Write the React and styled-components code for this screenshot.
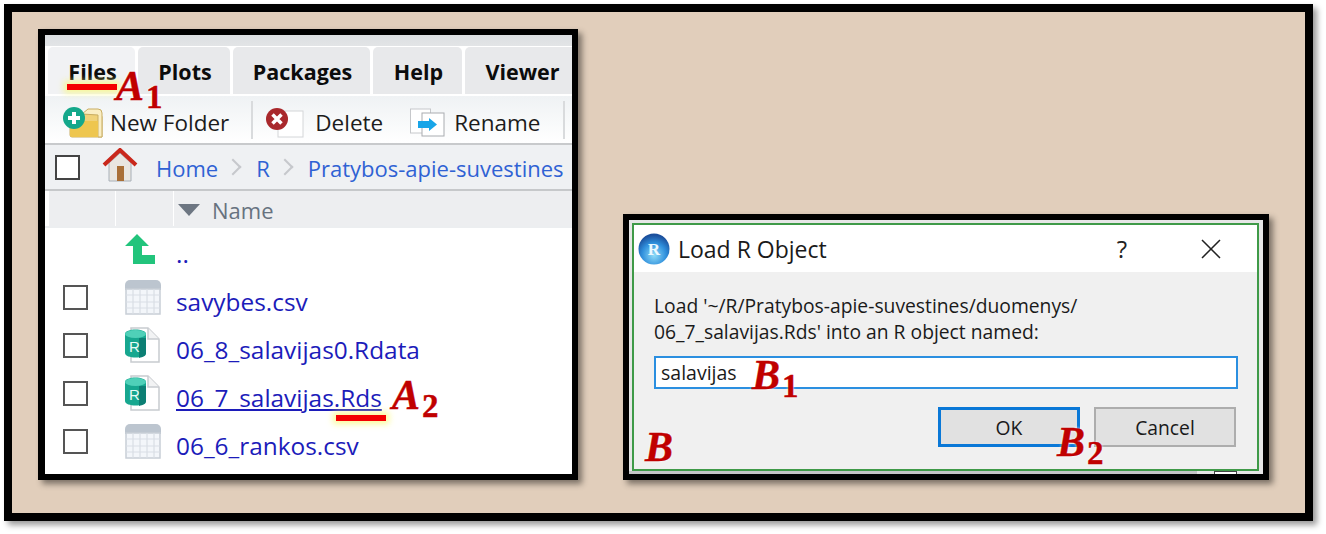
import React from 'react';
import styled, { createGlobalStyle } from 'styled-components';

const GlobalStyle = createGlobalStyle`
  html, body {
    margin: 0;
    padding: 0;
    background: #fff;
  }
  body {
    font-family: "Open Sans", "Liberation Sans", sans-serif;
  }
`;

const tabs = [
  { name: 'Files', width: 87, active: true },
  { name: 'Plots', width: 92 },
  { name: 'Packages', width: 137 },
  { name: 'Help', width: 89 },
  { name: 'Viewer', width: 113 },
];

const files = [
  { name: '..', icon: 'up' },
  { name: 'savybes.csv', icon: 'table', check: true },
  { name: '06_8_salavijas0.Rdata', icon: 'r', check: true },
  { name: '06_7_salavijas.Rds', icon: 'r', check: true, hover: true },
  { name: '06_6_rankos.csv', icon: 'table', check: true },
];

function NewFolderIcon() {
  return (
    <svg width="42" height="32" viewBox="0 0 42 32">
      <path d="M8 10h8l3-3h18a3 3 0 0 1 3 3v20H10a2 2 0 0 1-2-2z" fill="#f0d27a" stroke="#c9ad62" />
      <path d="M20 7 26 2h10a4 4 0 0 1 4 4v24h-4V8z" fill="#faeec4" stroke="#c9ad62" />
      <path d="M8 14h28v16H10a2 2 0 0 1-2-2z" fill="#eec64f" />
      <circle cx="12" cy="11" r="11" fill="#14a88b" />
      <path d="M12 5v12M6 11h12" stroke="#fff" strokeWidth="4" />
    </svg>
  );
}

function DeleteIcon() {
  return (
    <svg width="38" height="30" viewBox="0 0 38 30">
      <rect x="12" y="3" width="25" height="26" fill="#fff" stroke="#d4d6d8" />
      <circle cx="11" cy="11" r="11" fill="#a9282c" />
      <path d="M6.500 6.500l9 9M15.500 6.500l-9 9" stroke="#fff" strokeWidth="3.500" />
    </svg>
  );
}

function RenameIcon() {
  return (
    <svg width="35" height="30" viewBox="0 0 35 30">
      <rect x="0.500" y="1" width="20" height="24" fill="#fff" stroke="#c6c8cb" />
      <rect x="12" y="5" width="22" height="23" fill="#fff" stroke="#a9acb0" />
      <path d="M8 13h11v-3l8 6.500-8 6.500v-3H8z" fill="#18a5e8" />
    </svg>
  );
}

function HomeIcon() {
  return (
    <svg width="36" height="34" viewBox="0 0 36 34">
      <path d="M7 15 18 5l11 10v18H7z" fill="#e9e6e0" stroke="#a8b0b8" />
      <rect x="15" y="18" width="7" height="15" fill="#a96f36" />
      <path d="M2 17 18 2l16 15" fill="none" stroke="#c9281c" strokeWidth="4" />
    </svg>
  );
}

function UpIcon() {
  return (
    <svg width="30" height="30" viewBox="0 0 30 30">
      <path d="M0 12 12 0l12 12h-7v9h13v9H8V12z" fill="#22c47c" />
    </svg>
  );
}

function TableIcon() {
  return (
    <svg width="36" height="35" viewBox="0 0 36 35">
      <path d="M0 5a5 5 0 0 1 5-5h26a5 5 0 0 1 5 5v5H0z" fill="#bcc5cf" />
      <rect x="1" y="9" width="34" height="25" fill="#f3f6fa" stroke="#c8ced6" strokeWidth="1.500" />
      <path d="M8 9v25M15 9v25M22 9v25M29 9v25M1 15h34M1 22h34M1 28h34" stroke="#d9dee5" strokeWidth="1.200" />
    </svg>
  );
}

function RDocIcon() {
  return (
    <svg width="36" height="36" viewBox="0 0 36 36">
      <path d="M6 1h17l11 11v23H6z" fill="#fff" stroke="#c8cbcf" strokeWidth="1.500" />
      <path d="M23 1v11h11" fill="#f2f3f4" stroke="#c8cbcf" strokeWidth="1.500" />
      <path d="M0 7c0-6 21-6 21 0v19c0 6-21 6-21 0z" fill="#17a78f" />
      <ellipse cx="10.500" cy="7" rx="10.500" ry="4" fill="#4fd0b8" />
      <path d="M14 11h7v15c0 3-3 4-7 5z" fill="#0c7f74" />
      <text x="4" y="25" fontFamily="Liberation Sans, sans-serif" fontSize="15" fill="#e8fbf7">R</text>
    </svg>
  );
}

function RLogo() {
  return (
    <svg width="32" height="32" viewBox="0 0 32 32">
      <defs>
        <radialGradient id="rBall" cx="50%" cy="70%" r="65%">
          <stop offset="0%" stopColor="#8fdcf8" />
          <stop offset="60%" stopColor="#2f8fdc" />
          <stop offset="100%" stopColor="#1b4f9c" />
        </radialGradient>
      </defs>
      <circle cx="16" cy="16" r="15.500" fill="url(#rBall)" />
      <text x="16" y="22" textAnchor="middle" fontFamily="Liberation Serif, serif" fontWeight="bold" fontSize="17" fill="#eaf8ff">R</text>
    </svg>
  );
}

function CloseIcon() {
  return (
    <svg width="20" height="20" viewBox="0 0 20 20">
      <path d="M1 1l18 18M19 1 1 19" stroke="#222" strokeWidth="1.500" fill="none" />
    </svg>
  );
}

function FileIcon({ type }) {
  if (type === 'up') return <UpIcon />;
  if (type === 'table') return <TableIcon />;
  return <RDocIcon />;
}

function App() {
  return (
    <Page>
      <GlobalStyle />
      <Frame>
        <FilesPanel>
          <PanelInner>
            <TabBar>
              {tabs.map((tab) => (
                <Tab key={tab.name} $width={tab.width} $active={tab.active}>{tab.name}</Tab>
              ))}
            </TabBar>
            <Toolbar>
              <ToolButton $gap={6}><NewFolderIcon />New Folder</ToolButton>
              <ToolSeparator />
              <ToolButton $gap={11}><DeleteIcon />Delete</ToolButton>
              <ToolButton $gap={9} $offset={27}><RenameIcon />Rename</ToolButton>
              <ToolSeparator />
            </Toolbar>
            <PathBar>
              <HeaderCheck />
              <HomeSlot><HomeIcon /></HomeSlot>
              <Crumb>Home</Crumb>
              <Chevron />
              <Crumb>R</Crumb>
              <Chevron />
              <Crumb>Pratybos-apie-suvestines</Crumb>
            </PathBar>
            <TableHead>
              <HeadCell $width={66} />
              <HeadCell $width={57} />
              <NameHead><SortArrow />Name</NameHead>
            </TableHead>
            <FileList>
              {files.map((file) => (
                <FileRow key={file.name}>
                  <CheckCell>{file.check && <RowCheck />}</CheckCell>
                  <IconCell><FileIcon type={file.icon} /></IconCell>
                  <FileName $hover={file.hover}>{file.name}</FileName>
                </FileRow>
              ))}
            </FileList>
          </PanelInner>
          <Underscore $left={22} $top={49} />
          <Underscore $left={291} $top={380} />
          <Tag $left={71} $top={36}>A<sub>1</sub></Tag>
          <Tag $left={347} $top={345}>A<sub>2</sub></Tag>
        </FilesPanel>

        <DialogPanel>
          <BehindStrip />
          <BehindBox />
          <DialogWindow>
            <TitleBar>
              <RLogo />
              <Title>Load R Object</Title>
              <HelpMark>?</HelpMark>
              <CloseSlot><CloseIcon /></CloseSlot>
            </TitleBar>
            <DialogBody>
              <Message>
                Load '~/R/Pratybos-apie-suvestines/duomenys/<br />
                06_7_salavijas.Rds' into an R object named:
              </Message>
              <Field>salavijas</Field>
              <ButtonRow>
                <DialogButton $primary>OK</DialogButton>
                <DialogButton>Cancel</DialogButton>
              </ButtonRow>
            </DialogBody>
          </DialogWindow>
          <Tag $left={123} $top={140}>B<sub>1</sub></Tag>
          <Tag $left={16} $top={212}>B</Tag>
          <Tag $left={428} $top={207}>B<sub>2</sub></Tag>
        </DialogPanel>
      </Frame>
    </Page>
  );
}

export default App;

const Page = styled.div`
  padding: 4px 0 0 4px;
  width: 1326px;
  height: 534px;
  box-sizing: border-box;
  overflow: hidden;
`;

const Frame = styled.div`
  box-sizing: border-box;
  width: 1309px;
  height: 517px;
  border: 8px solid #000;
  background: #e1cebb;
  box-shadow: 4px 4px 6px rgba(0, 0, 0, 0.4);
  display: flex;
  align-items: flex-end;
  padding: 0 0 33px 26px;
  gap: 45px;
`;

const FilesPanel = styled.div`
  position: relative;
  box-sizing: border-box;
  width: 540px;
  height: 451px;
  border: solid #000;
  border-width: 6px 6px 6px 7px;
  box-shadow: 4px 4px 6px rgba(0, 0, 0, 0.45);
  background: #fff;
`;

const PanelInner = styled.div`
  height: 100%;
  overflow: hidden;
  display: flex;
  flex-direction: column;
`;

const TabBar = styled.div`
  display: flex;
  gap: 3px;
  height: 59px;
  padding: 12px 0 0 3px;
  box-sizing: border-box;
  background: linear-gradient(#dcdfe2, #e2e4e6 11px, #ffffff 11px);
  flex-shrink: 0;
`;

const Tab = styled.div`
  flex-shrink: 0;
  box-sizing: border-box;
  width: ${(p) => p.$width}px;
  height: 47px;
  display: flex;
  align-items: center;
  justify-content: center;
  border-radius: 5px 5px 0 0;
  background: ${(p) => (p.$active ? '#f1f2f4' : '#e8e9eb')};
  color: #0c0c0c;
  font-size: 21.500px;
  font-weight: 700;
  padding: 2px 0 0 2px;
`;

const Toolbar = styled.div`
  height: 49px;
  flex-shrink: 0;
  margin-top: 2px;
  box-sizing: border-box;
  display: flex;
  align-items: center;
  padding: 7px 0 0 17px;
  background: linear-gradient(#eff2f4, #ffffff);
  border-bottom: 2px solid #c8cacc;
  font-size: 22.500px;
  line-height: 24px;
  color: #1c1c1c;
`;

const ToolButton = styled.div`
  flex-shrink: 0;
  display: flex;
  align-items: center;
  gap: ${(p) => p.$gap}px;
  margin-left: ${(p) => p.$offset || 0}px;
  white-space: nowrap;
`;

const ToolSeparator = styled.div`
  flex-shrink: 0;
  width: 2px;
  height: 38px;
  margin: -7px 13px 0 22px;
  background: #d9dbdd;
`;

const PathBar = styled.div`
  height: 46px;
  flex-shrink: 0;
  box-sizing: border-box;
  display: flex;
  align-items: center;
  padding-left: 10px;
  background: #eff1f3;
  border-bottom: 2px solid #c6c8ca;
  white-space: nowrap;
`;

const HeaderCheck = styled.div`
  width: 25px;
  height: 25px;
  box-sizing: border-box;
  border: 2px solid #444;
  background: #fff;
  flex-shrink: 0;
`;

const HomeSlot = styled.div`
  display: flex;
  margin: -4px 18px 0 22px;
`;

const Crumb = styled.div`
  color: #2f62d4;
  font-size: 22px;
  padding-top: 2px;
`;

const Chevron = styled.div`
  width: 10px;
  height: 10px;
  margin: 0 17px 0 9px;
  border: solid #c6c8cc;
  border-width: 2px 2px 0 0;
  transform: rotate(45deg);
  flex-shrink: 0;
`;

const TableHead = styled.div`
  height: 37px;
  flex-shrink: 0;
  display: flex;
  gap: 1px;
  padding-left: 4px;
  background: #fff;
  border-bottom: 2px solid #eceef0;
  box-sizing: border-box;
`;

const HeadCell = styled.div`
  width: ${(p) => p.$width}px;
  flex-shrink: 0;
  background: #edeef0;
`;

const NameHead = styled.div`
  flex: 1;
  display: flex;
  align-items: center;
  gap: 12px;
  padding: 2px 0 0 4px;
  background: #edeef0;
  color: #67727f;
  font-size: 22px;
`;

const SortArrow = styled.div`
  width: 0;
  height: 0;
  border: solid transparent;
  border-width: 12px 11px 0;
  border-top-color: #6d7682;
`;

const FileList = styled.div`
  display: flex;
  flex-direction: column;
  padding-top: 2px;
`;

const FileRow = styled.div`
  height: 48px;
  flex-shrink: 0;
  display: flex;
  align-items: center;
`;

const CheckCell = styled.div`
  width: 80px;
  padding-left: 18px;
  box-sizing: border-box;
  flex-shrink: 0;
`;

const RowCheck = styled.div`
  width: 25px;
  height: 25px;
  box-sizing: border-box;
  border: 2px solid #555;
  margin-top: -10px;
`;

const IconCell = styled.div`
  width: 51px;
  flex-shrink: 0;
  display: flex;
  margin-top: -10px;
`;

const FileName = styled.div`
  color: #1c1cba;
  font-size: 24.400px;
  margin-top: -2px;
  white-space: nowrap;
  text-decoration: ${(p) => (p.$hover ? 'underline' : 'none')};
`;

const Underscore = styled.div`
  position: absolute;
  left: ${(p) => p.$left}px;
  top: ${(p) => p.$top}px;
  width: 50px;
  height: 6px;
  background: #f40000;
  box-shadow: 0 0 6px 3px rgba(250, 250, 120, 0.75);
`;

const Tag = styled.div`
  position: absolute;
  left: ${(p) => p.$left}px;
  top: ${(p) => p.$top}px;
  font-family: "Liberation Serif", serif;
  font-weight: 700;
  font-style: italic;
  font-size: 42px;
  line-height: 30px;
  color: #c00000;
  white-space: nowrap;
  text-shadow: 0 0 3px #fff;
  -webkit-text-stroke: 0.4px #c00000;

  sub {
    font-style: normal;
    font-size: 33px;
    line-height: 0;
    vertical-align: -8px;
    margin-left: 2px;
  }
`;

const DialogPanel = styled.div`
  position: relative;
  box-sizing: border-box;
  width: 646px;
  height: 266px;
  border: 6px solid #000;
  background: #e6e6e6;
  padding: 3px 4px 3px 3px;
  box-shadow: 4px 4px 6px rgba(0, 0, 0, 0.45);
`;

const BehindStrip = styled.div`
  position: absolute;
  left: 0;
  bottom: 0;
  width: 568px;
  height: 3px;
  background: #c4c5c6;
`;

const BehindBox = styled.div`
  position: absolute;
  right: 26px;
  bottom: 0;
  width: 23px;
  height: 3px;
  box-sizing: border-box;
  border: solid #444;
  border-width: 1px 1px 0;
  background: #fff;
`;

const DialogWindow = styled.div`
  position: relative;
  box-sizing: border-box;
  height: 100%;
  border: 2px solid #3f9a48;
  background: #f0f0f0;
  display: flex;
  flex-direction: column;
`;

const TitleBar = styled.div`
  height: 47px;
  flex-shrink: 0;
  box-sizing: border-box;
  background: #fff;
  display: flex;
  align-items: center;
  padding-left: 4px;
`;

const Title = styled.div`
  margin-left: 8px;
  font-size: 23px;
  color: #1a1a1a;
`;

const HelpMark = styled.div`
  margin-left: auto;
  font-size: 24px;
  color: #222;
`;

const CloseSlot = styled.div`
  display: flex;
  margin: 0 36px 0 74px;
`;

const DialogBody = styled.div`
  display: flex;
  flex-direction: column;
  padding: 21px 19px 0 20px;
`;

const Message = styled.div`
  font-size: 19.300px;
  line-height: 26px;
  color: #1a1a1a;
  white-space: nowrap;
`;

const Field = styled.div`
  box-sizing: border-box;
  height: 33px;
  margin-top: 11px;
  padding-left: 5px;
  border: 2px solid #2b8fe0;
  background: #fff;
  font-size: 19.500px;
  line-height: 29px;
  color: #1a1a1a;
`;

const ButtonRow = styled.div`
  display: flex;
  justify-content: flex-end;
  gap: 14px;
  margin: 18px 2px 0 0;
`;

const DialogButton = styled.div`
  box-sizing: border-box;
  width: 142px;
  height: 40px;
  display: flex;
  align-items: center;
  justify-content: center;
  background: #e1e1e1;
  border: ${(p) => (p.$primary ? '3px solid #0a78d7' : '2px solid #adadad')};
  font-size: 19.300px;
  color: #1a1a1a;
`;
